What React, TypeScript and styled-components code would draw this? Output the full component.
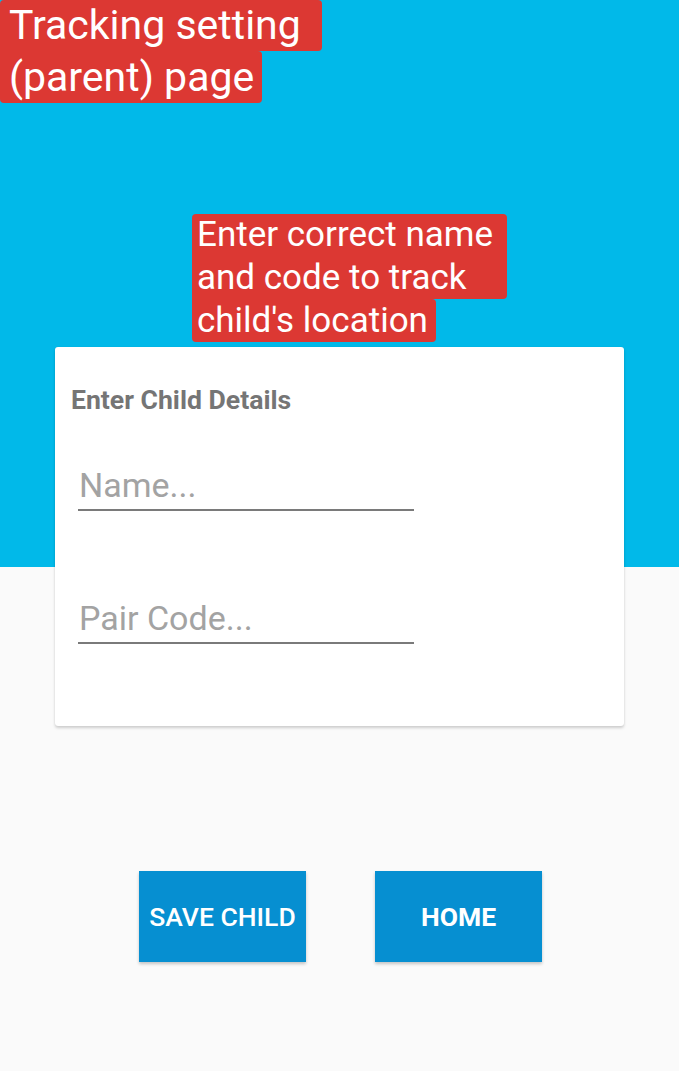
import React from "react";
import styled, { createGlobalStyle } from "styled-components";

const Global = createGlobalStyle`
  html, body { margin: 0; padding: 0; }
  body { width: 679px; height: 1071px; overflow: hidden; font-family: Roboto, "Liberation Sans", sans-serif; }
`;

const Page = styled.div`
  position: relative;
  width: 679px;
  height: 1071px;
  background: linear-gradient(to bottom, #01b9e9 0, #01b9e9 567px, #fafafa 567px, #fafafa 100%);
  padding-top: 347px;
  box-sizing: border-box;
  display: flex;
  flex-direction: column;
  align-items: center;
`;

const Card = styled.div`
  width: 569px;
  height: 379px;
  box-sizing: border-box;
  background: #ffffff;
  border-radius: 3px;
  box-shadow: 0 2px 3px rgba(0, 0, 0, 0.18), 0 0 1px rgba(0, 0, 0, 0.08);
  padding: 38px 16px 0 16px;
  display: flex;
  flex-direction: column;
`;

const CardTitle = styled.div`
  font-family: Roboto, "Liberation Sans", sans-serif;
  font-weight: 700;
  font-size: 26.6px;
  line-height: 30px;
  color: #757575;
`;

const Field = styled.div<{ $top: number }>`
  margin-top: ${(p) => p.$top}px;
  margin-left: 7px;
  width: 335px;
  border-bottom: 2px solid #7a7a7a;
  padding: 0 0 4px 1px;
  font-family: Roboto, "Liberation Sans", sans-serif;
  font-size: 34px;
  line-height: 40px;
  color: #a3a3a3;
`;

const ButtonRow = styled.div`
  margin-top: 145px;
  display: flex;
  gap: 69px;
  margin-left: 2px;
`;

const Button = styled.button<{ $weight: number }>`
  width: 167px;
  height: 91px;
  border: none;
  background: #068fd1;
  color: #ffffff;
  font-family: Roboto, "Liberation Sans", sans-serif;
  font-size: 26.5px;
  font-weight: ${(p) => p.$weight};
  text-transform: uppercase;
  box-shadow: 0 2px 3px rgba(0, 0, 0, 0.22);
  padding: 0;
  cursor: pointer;
`;

const Note = styled.div<{ $x: number; $y: number; $w: number }>`
  position: absolute;
  left: ${(p) => p.$x}px;
  top: ${(p) => p.$y}px;
  width: ${(p) => p.$w}px;
  display: flex;
  flex-direction: column;
  align-items: flex-start;
`;

const NoteLine = styled.div<{
  $size: number;
  $h: number;
  $padL: number;
  $radius: string;
  $full?: boolean;
}>`
  align-self: ${(p) => (p.$full ? "stretch" : "flex-start")};
  background: #dc3833;
  border-radius: ${(p) => p.$radius};
  padding: 0 8px 0 ${(p) => p.$padL}px;
  height: ${(p) => p.$h}px;
  font-family: Roboto, "Liberation Sans", sans-serif;
  font-size: ${(p) => p.$size}px;
  line-height: ${(p) => p.$h}px;
  color: #ffffff;
  white-space: nowrap;
`;

export default function App() {
  return (
    <>
      <Global />
      <Page>
        <Card>
          <CardTitle>Enter Child Details</CardTitle>
          <Field $top={50}>Name...</Field>
          <Field $top={87}>Pair Code...</Field>
        </Card>
        <ButtonRow>
          <Button $weight={500}>Save Child</Button>
          <Button $weight={700}>Home</Button>
        </ButtonRow>
        <Note $x={0} $y={0} $w={322}>
          <NoteLine $size={41} $h={51} $padL={9} $radius="4px 4px 4px 0" $full>
            Tracking setting
          </NoteLine>
          <NoteLine $size={41} $h={52} $padL={9} $radius="0 4px 4px 4px">
            (parent) page
          </NoteLine>
        </Note>
        <Note $x={192} $y={214} $w={315}>
          <NoteLine $size={35} $h={42} $padL={5} $radius="4px 4px 0 0" $full>
            Enter correct name
          </NoteLine>
          <NoteLine $size={35} $h={43} $padL={5} $radius="0 0 4px 0" $full>
            and code to track
          </NoteLine>
          <NoteLine $size={35} $h={43} $padL={5} $radius="0 4px 4px 4px">
            child's location
          </NoteLine>
        </Note>
      </Page>
    </>
  );
}
